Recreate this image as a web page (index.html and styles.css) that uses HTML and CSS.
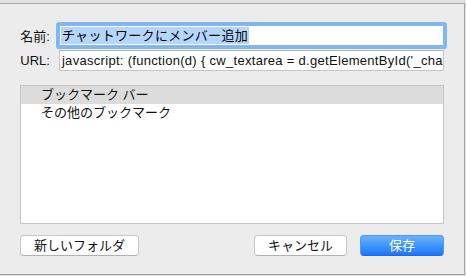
FILE: index.html
```html
<!DOCTYPE html>
<html lang="ja">
<head>
    <meta charset="UTF-8">
    <meta name="viewport" content="width=device-width, initial-scale=1.0">
    <title>ブックマークを追加</title>
    <link rel="stylesheet" href="styles.css">
</head>
<body>
    <div class="sheet">
        <div class="form-row">
            <label class="field-label">名前:</label>
            <div class="text-field is-focused"><span class="selection">チャットワークにメンバー追加</span></div>
        </div>
        <div class="form-row">
            <label class="field-label">URL:</label>
            <div class="text-field url-field">javascript: (function(d) { cw_textarea = d.getElementById('_chat_text_area'); })(document);</div>
        </div>

        <ul class="folder-list">
            <li class="folder is-selected">ブックマーク バー</li>
            <li class="folder">その他のブックマーク</li>
        </ul>

        <div class="button-bar">
            <button class="btn">新しいフォルダ</button>
            <span class="spacer"></span>
            <button class="btn">キャンセル</button>
            <button class="btn btn-primary">保存</button>
        </div>
    </div>
</body>
</html>
```

FILE: styles.css
```css
body {
    margin: 0;
    width: 466px;
    height: 276px;
    overflow: hidden;
    background: #e2e2e2;
    font-family: "Liberation Sans", "Noto Sans CJK JP", sans-serif;
    font-size: 13px;
    color: #111;
}
.sheet {
    box-sizing: border-box;
    width: 465px;
    height: 272px;
    margin-top: 3px;
    padding: 21px 20px 0 20px;
    background: #ececec;
    border-top: 1px solid #a8a8a8;
    border-bottom: 1px solid #9c9c9c;
    border-right: 1px solid #a4a4a4;
}
.form-row {
    display: flex;
    align-items: center;
    gap: 9px;
    height: 21px;
    margin-bottom: 4px;
}
.field-label {
    width: 30px;
    text-align: right;
    white-space: nowrap;
}
.text-field {
    box-sizing: border-box;
    width: 386px;
    height: 21px;
    padding: 0 2px;
    line-height: 19px;
    background: #fff;
    border: 1px solid #c6c6c6;
    border-top-color: #b4b4b4;
    white-space: nowrap;
    overflow: hidden;
}
.url-field {
    letter-spacing: 0.3px;
}
.text-field.is-focused {
    border-color: #86b6ec;
    border-radius: 1px;
    box-shadow: 0 0 0 3px #82b6f1;
    padding-left: 1px;
}
.selection {
    display: inline-block;
    line-height: 17px;
    padding: 0 1px;
    letter-spacing: 0.3px;
    background: #b4d6fd;
    color: #000;
}
.folder-list {
    box-sizing: border-box;
    height: 139px;
    margin: 14px 0 0 0;
    padding: 0;
    list-style: none;
    background: #fff;
    border: 1px solid #c4c4c4;
}
.folder {
    height: 18px;
    line-height: 18px;
    padding-left: 20px;
}
.folder.is-selected {
    background: #dcdcdc;
}
.button-bar {
    display: flex;
    align-items: center;
    margin-top: 11px;
}
.spacer {
    flex-grow: 1;
}
.btn {
    box-sizing: border-box;
    height: 21px;
    padding: 0 13px;
    font-family: inherit;
    font-size: 13px;
    line-height: 19px;
    color: #111;
    background: #fff;
    border: 1px solid #c8c8c8;
    border-bottom-color: #b2b2b2;
    border-radius: 4px;
}
.btn-primary {
    min-width: 84px;
    margin-left: 13px;
    color: #fff;
    background: linear-gradient(#6ab4fb, #1877fc);
    border-color: #4d98f5;
    border-bottom-color: #2166e0;
}
```
